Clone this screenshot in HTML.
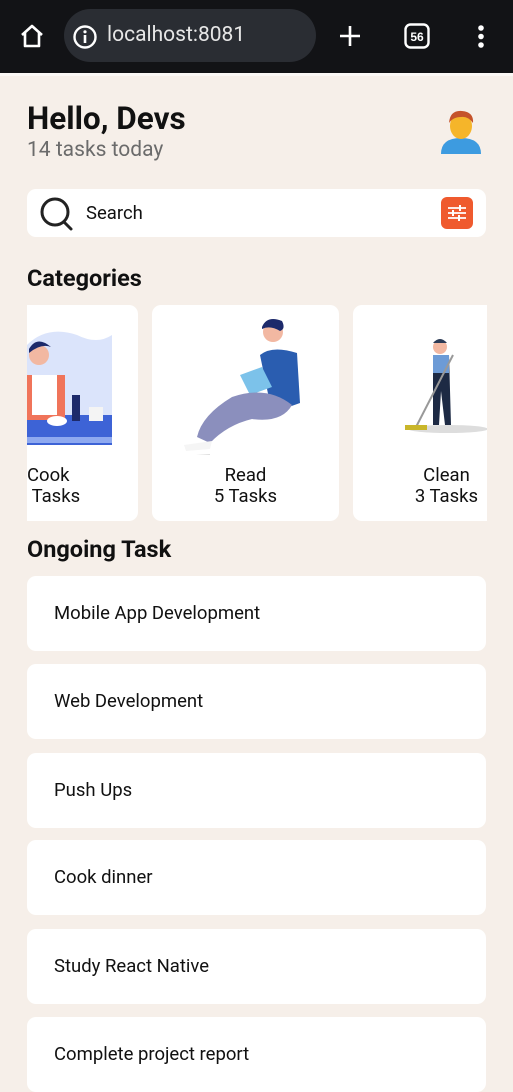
<!DOCTYPE html>
<html><head><meta charset="utf-8"><style>
*{margin:0;padding:0;box-sizing:border-box}
body{width:513px;height:1080px;overflow:hidden;background:#f6efe9;font-family:"Roboto","Liberation Sans",sans-serif;position:relative}
.bar{position:absolute;left:0;top:0;width:513px;height:73px;background:#121316}
.line{position:absolute;left:0;top:73px;width:513px;height:3px;background:#fbf8f5}
.pill{position:absolute;left:64px;top:9px;width:252px;height:53px;border-radius:27px;background:#2a2d33}
.url{position:absolute;left:107px;top:23px;color:#e6e6e6;font-size:21px}
.abs{position:absolute}
h1{position:absolute;left:27px;top:100px;font-size:31.5px;font-weight:bold;color:#111}
.sub{position:absolute;left:27px;top:138px;font-size:21px;color:#6b6b6b}
.search{position:absolute;left:27px;top:189px;width:459px;height:48px;background:#fff;border-radius:9px}
.h2{position:absolute;left:27px;font-size:23.5px;font-weight:bold;color:#111}
.clip{position:absolute;left:27px;top:305px;width:460px;height:217px;overflow:hidden}
.card{position:absolute;top:0;width:187px;height:216px;background:#fff;border-radius:9px;text-align:center;font-size:18.5px;color:#111;line-height:21px}
.card .t{position:absolute;left:0;right:0;top:160px}
.task{position:absolute;left:27px;width:459px;height:75px;background:#fff;border-radius:9px;font-size:18.5px;color:#111;padding-left:27px;line-height:75px}
</style></head><body>
<div class="bar"></div><div class="line"></div>
<svg class="abs" style="left:18px;top:22px" width="28" height="28" viewBox="0 0 28 28"><path d="M4 13 L14 4 L24 13 M7 11 V24 H21 V11" fill="none" stroke="#fff" stroke-width="2.6" stroke-linejoin="round"/></svg>
<div class="pill"></div>
<svg class="abs" style="left:72px;top:24px" width="26" height="26" viewBox="0 0 26 26"><circle cx="13" cy="13" r="10.5" fill="none" stroke="#fff" stroke-width="2.4"/><rect x="11.7" y="11" width="2.6" height="8" fill="#fff"/><circle cx="13" cy="7.8" r="1.6" fill="#fff"/></svg>
<div class="url">localhost:8081</div>
<svg class="abs" style="left:338px;top:24px" width="24" height="24"><path d="M12 2V22M2 12H22" stroke="#fff" stroke-width="2.6"/></svg>
<svg class="abs" style="left:404px;top:23px" width="26" height="26"><rect x="1.5" y="1.5" width="23" height="23" rx="5" fill="none" stroke="#fff" stroke-width="2.4"/><text x="13" y="18" text-anchor="middle" fill="#fff" font-size="12" font-weight="bold" font-family="Liberation Sans">56</text></svg>
<svg class="abs" style="left:476px;top:24px" width="10" height="26"><circle cx="5" cy="4" r="2.8" fill="#fff"/><circle cx="5" cy="12.5" r="2.8" fill="#fff"/><circle cx="5" cy="21" r="2.8" fill="#fff"/></svg>

<h1>Hello, Devs</h1>
<div class="sub">14 tasks today</div>
<svg class="abs" style="left:438px;top:108px" width="46" height="48" viewBox="0 0 46 48"><path d="M3 46 Q3 30 23 30 Q43 30 43 46Z" fill="#3d9be0"/><ellipse cx="23" cy="18" rx="11" ry="13" fill="#f5b52a"/><path d="M11 15 Q12 2 24 3 Q36 4 35 15 Q30 8 23 9 Q15 9 11 15Z" fill="#c5532b"/></svg>

<div class="search"></div>
<svg class="abs" style="left:38px;top:196px" width="36" height="36" viewBox="0 0 36 36"><circle cx="17" cy="16" r="13" fill="none" stroke="#222" stroke-width="3"/><path d="M26 26 L33 33" stroke="#222" stroke-width="3" stroke-linecap="round"/></svg>
<div class="abs" style="left:86px;top:202px;font-size:18.5px;color:#111">Search</div>
<svg class="abs" style="left:441px;top:197px" width="32" height="32" viewBox="0 0 32 32"><rect width="32" height="32" rx="6" fill="#ef5a2e"/><path d="M7 11H25M7 16H25M7 21H25" stroke="#fff" stroke-width="1.8"/><path d="M19 8V14M12 13V19M18 18V24" stroke="#fff" stroke-width="2"/></svg>

<div class="h2" style="top:264px">Categories</div>
<div class="clip">
 <div class="card" style="left:-76px">
  <svg class="abs" style="left:76px;top:20px" width="85" height="120" viewBox="0 0 85 120"><path d="M0 20 Q20 0 50 10 Q70 20 85 10 V120 H0Z" fill="#dbe4fb"/><rect x="0" y="90" width="85" height="30" fill="#3d63d6"/><rect x="0" y="112" width="85" height="6" fill="#8ea9f0"/><path d="M0 50 H38 V95 H0Z" fill="#f0745a"/><path d="M5 50 H30 V90 H5Z" fill="#fff"/><circle cx="12" cy="30" r="10" fill="#f2b8a2"/><path d="M2 24 Q10 10 24 22 Q14 18 2 28Z" fill="#1d2a6b"/><rect x="45" y="70" width="8" height="26" fill="#1d2a6b"/><rect x="62" y="82" width="14" height="14" fill="#f4f4f4"/><ellipse cx="30" cy="96" rx="10" ry="5" fill="#fff"/></svg>
  <div class="t" style="left:76px;text-align:left;padding-left:0">Cook<br>&nbsp;Tasks</div>
 </div>
 <div class="card" style="left:125px">
  <svg class="abs" style="left:20px;top:10px" width="150" height="140" viewBox="0 0 150 140"><circle cx="101" cy="17" r="10" fill="#f2b8a2"/><path d="M90 12 Q95 0 110 6 Q114 14 108 16 Q98 10 90 14Z" fill="#1d2a6b"/><path d="M88 40 Q100 30 125 38 L128 88 L100 98 Z" fill="#2a5db0"/><path d="M68 60 L90 52 L100 72 L78 80Z" fill="#7cc2ea"/><path d="M25 122 Q30 100 60 82 Q95 70 120 90 Q110 108 80 104 Q55 110 38 128Z" fill="#8b8fbd"/><path d="M12 130 L40 126 L38 134 L14 136Z" fill="#f5f5f5"/><path d="M10 142 L38 140" stroke="#ddd" stroke-width="2"/></svg>
  <div class="t">Read<br>5 Tasks</div>
 </div>
 <div class="card" style="left:326px">
  <svg class="abs" style="left:50px;top:28px" width="90" height="104" viewBox="0 0 90 104"><ellipse cx="45" cy="96" rx="40" ry="4" fill="#ddd"/><circle cx="37" cy="14" r="7" fill="#f2b8a2"/><path d="M30 10 Q37 2 44 10Z" fill="#2b3a55"/><path d="M30 22 H46 L48 92 H42 L38 58 L36 92 H30Z" fill="#1d2a44"/><path d="M30 22 H46 V40 H30Z" fill="#6d9bd6"/><path d="M50 22 L12 96" stroke="#999" stroke-width="2"/><rect x="2" y="92" width="22" height="5" fill="#c9b62a"/></svg>
  <div class="t">Clean<br>3 Tasks</div>
 </div>
</div>

<div class="h2" style="top:535px">Ongoing Task</div>
<div class="task" style="top:576px">Mobile App Development</div>
<div class="task" style="top:664px">Web Development</div>
<div class="task" style="top:753px">Push Ups</div>
<div class="task" style="top:840px">Cook dinner</div>
<div class="task" style="top:929px">Study React Native</div>
<div class="task" style="top:1017px">Complete project report</div>
</body></html>
